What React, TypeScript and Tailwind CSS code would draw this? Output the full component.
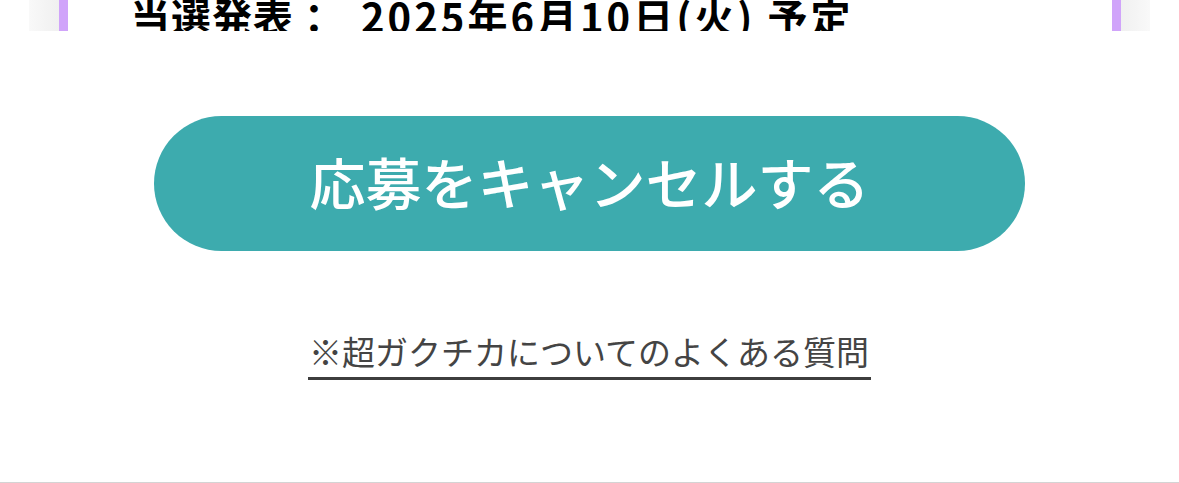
export default function App() {
  const font = { fontFamily: '"Noto Sans CJK JP", "Noto Sans", sans-serif' };
  return (
    <div className="flex h-[483px] w-full flex-col bg-white" style={font}>
      {/* bottom of the schedule card, cut off by the viewport */}
      <div className="mx-[29px] flex h-[31px]">
        <div className="w-[30px] bg-gradient-to-r from-[#f9f9f9] to-[#f0f0f0]" />
        <div className="w-[9px] bg-[#d0a4fa]" />
        <div className="relative flex flex-1 items-end overflow-hidden bg-white pl-[62px]">
          <p className="mb-[-5px] whitespace-nowrap text-[40px] font-bold leading-none tracking-[1px] text-black">
            当選発表：
            <span className="ml-[26px] tracking-[3px]">2025年6月10日(火) 予定</span>
          </p>
        </div>
        <div className="w-[9px] bg-[#d0a4fa]" />
        <div className="w-[29px] bg-gradient-to-r from-[#f0f0f0] to-[#f9f9f9]" />
      </div>

      <div className="mt-[85px] flex justify-center">
        <button className="flex h-[135px] w-[871px] items-center justify-center rounded-full bg-[#3dabae] pb-[6px] text-[56px] font-medium leading-none text-white">
          応募をキャンセルする
        </button>
      </div>

      <div className="mt-[81px] flex justify-center">
        <a
          href="#"
          className="border-b-[3px] border-[#3d3d3d] pb-[5px] pl-[1px] pr-[2px] text-[33px] leading-[1.2] text-[#444444]"
        >
          ※超ガクチカについてのよくある質問
        </a>
      </div>

      <div className="flex-1" />
      <div className="h-px bg-[#d4d4d4]" />
    </div>
  );
}
